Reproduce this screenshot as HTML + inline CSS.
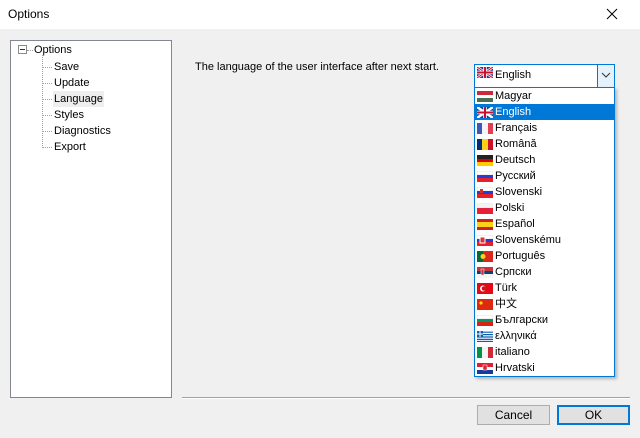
<!DOCTYPE html>
<html><head><meta charset="utf-8"><style>
*{margin:0;padding:0;box-sizing:border-box}
body{width:640px;height:438px;background:#f0f0f0;font-family:"Liberation Sans","Noto Sans CJK SC",sans-serif;font-size:11px;color:#000;position:relative;overflow:hidden}
.abs{position:absolute}
#title{left:0;top:0;width:640px;height:29px;background:#fff}
#tree{left:10px;top:40px;width:162px;height:358px;background:#fff;border:1px solid #828790}
.ti{position:absolute;left:43px;font-size:11px;line-height:14px}
.dl{position:absolute;border-top:1px dotted #a0a0a0;width:9px}
.btn{position:absolute;top:405px;width:73px;height:20px;background:#e1e1e1;border:1px solid #adadad;text-align:center;line-height:18px;font-size:12px}
#list{left:474px;top:87px;width:141px;height:290px;background:#fff;border:1px solid #0078d7;box-shadow:2px 2px 3px rgba(0,0,0,.25)}
.it{position:absolute;left:0;width:139px;height:16px;line-height:16px;padding-left:20px;font-size:11px}
.fl{position:absolute;left:2px;top:3px;width:16px;height:11px}
</style></head><body>
<div id="title" class="abs"><span class="abs" style="left:8px;top:7px;font-size:12px">Options</span>
<svg class="abs" style="left:606px;top:8px" width="12" height="12"><path d="M1 1L11 11M11 1L1 11" stroke="#000" stroke-width="1"/></svg></div>
<div id="tree" class="abs"></div>
<svg class="abs" style="left:18px;top:45px" width="12" height="12"><rect x="0.5" y="0.5" width="8" height="8" fill="#fff" stroke="#8a8a8a"/><path d="M2 4.5H7" stroke="#333"/></svg>
<div class="dl" style="left:27px;top:50px;width:6px"></div>
<div class="abs" style="left:42px;top:55px;height:93px;border-left:1px dotted #a0a0a0"></div>
<span class="abs" style="left:34px;top:44px;font-size:11px">Options</span>
<div class="dl" style="left:43px;top:67px"></div><span class="ti" style="left:54px;top:60px">Save</span>
<div class="dl" style="left:43px;top:83px"></div><span class="ti" style="left:54px;top:76px">Update</span>
<div class="dl" style="left:43px;top:99px"></div><span class="ti" style="left:53px;top:91px;background:#eeeeee;padding:0 1px;height:16px;line-height:16px">Language</span>
<div class="dl" style="left:43px;top:115px"></div><span class="ti" style="left:54px;top:108px">Styles</span>
<div class="dl" style="left:43px;top:131px"></div><span class="ti" style="left:54px;top:124px">Diagnostics</span>
<div class="dl" style="left:43px;top:147px"></div><span class="ti" style="left:54px;top:140px">Export</span>
<span class="abs" style="left:195px;top:61px;font-size:11px">The language of the user interface after next start.</span>
<div class="abs" style="left:474px;top:64px;width:141px;height:24px;background:#fff;border:1px solid #0078d7"></div>
<div class="abs" style="left:597px;top:65px;width:17px;height:22px;background:#e5f1fb;border-left:1px solid #0078d7"></div>
<svg class="abs" style="left:601px;top:72px" width="10" height="6"><path d="M1 1L5 5L9 1" stroke="#333" fill="none"/></svg>
<svg class="abs" style="left:477px;top:67px" width="16" height="11"><rect width="16" height="11" fill="#233b8f"/><path d="M0 0L16 11M16 0L0 11" stroke="#fff" stroke-width="2.5"/><path d="M0 0L16 11M16 0L0 11" stroke="#c8102e" stroke-width="1"/><path d="M8 0V11M0 5.5H16" stroke="#fff" stroke-width="3.5"/><path d="M8 0V11M0 5.5H16" stroke="#c8102e" stroke-width="2"/></svg>
<span class="abs" style="left:495px;top:69px;font-size:11px">English</span>
<div id="list" class="abs">
<div class="it" style="top:0"><svg class="fl"><rect width="16" height="4" fill="#ce2939"/><rect y="4" width="16" height="3" fill="#fff"/><rect y="7" width="16" height="4" fill="#477050"/></svg>Magyar</div>
<div class="it" style="top:16px;background:#0078d7;color:#fff"><svg class="fl"><rect width="16" height="11" fill="#233b8f"/><path d="M0 0L16 11M16 0L0 11" stroke="#fff" stroke-width="2.5"/><path d="M8 0V11M0 5.5H16" stroke="#fff" stroke-width="3.5"/><path d="M8 0V11M0 5.5H16" stroke="#c8102e" stroke-width="2"/></svg>English</div>
<div class="it" style="top:32px"><svg class="fl"><rect width="6" height="11" fill="#3a5ab8"/><rect x="5" width="6" height="11" fill="#f4f4f4"/><rect x="11" width="5" height="11" fill="#e04050"/></svg>Français</div>
<div class="it" style="top:48px"><svg class="fl"><rect width="6" height="11" fill="#002b7f"/><rect x="5" width="6" height="11" fill="#fcd116"/><rect x="11" width="5" height="11" fill="#ce1126"/></svg>Română</div>
<div class="it" style="top:64px"><svg class="fl"><rect width="16" height="4" fill="#222"/><rect y="4" width="16" height="3" fill="#dd0000"/><rect y="7" width="16" height="4" fill="#ffce00"/></svg>Deutsch</div>
<div class="it" style="top:80px"><svg class="fl"><rect width="16" height="4" fill="#fff" stroke="#ccc" stroke-width=".5"/><rect y="4" width="16" height="3" fill="#1f3fd8"/><rect y="7" width="16" height="4" fill="#e4202a"/></svg>Русский</div>
<div class="it" style="top:96px"><svg class="fl"><rect width="16" height="4" fill="#fff" stroke="#ccc" stroke-width=".5"/><rect y="4" width="16" height="3" fill="#1f3fd8"/><rect y="7" width="16" height="4" fill="#e4202a"/><rect x="3" y="2" width="3" height="4" fill="#c33"/></svg>Slovenski</div>
<div class="it" style="top:112px"><svg class="fl"><rect width="16" height="5" fill="#f4f4f4" stroke="#ddd" stroke-width=".5"/><rect y="5" width="16" height="6" fill="#e4203a"/></svg>Polski</div>
<div class="it" style="top:128px"><svg class="fl"><rect width="16" height="3" fill="#d02020"/><rect y="3" width="16" height="5" fill="#fcd116"/><rect y="8" width="16" height="3" fill="#d02020"/></svg>Español</div>
<div class="it" style="top:144px"><svg class="fl"><rect width="16" height="4" fill="#fff" stroke="#ccc" stroke-width=".5"/><rect y="4" width="16" height="3" fill="#1f3fd8"/><rect y="7" width="16" height="4" fill="#e4202a"/><rect x="3" y="2" width="5" height="6" fill="#d33" stroke="#fff"/></svg>Slovenskému</div>
<div class="it" style="top:160px"><svg class="fl"><rect width="6" height="11" fill="#046a38"/><rect x="6" width="10" height="11" fill="#da291c"/><circle cx="6" cy="5.5" r="2.5" fill="#fcd116"/></svg>Português</div>
<div class="it" style="top:176px"><svg class="fl"><rect width="16" height="4" fill="#c6363c"/><rect y="4" width="16" height="3" fill="#0c4076"/><rect y="7" width="16" height="4" fill="#f4f4f4"/><rect x="4" y="2" width="3" height="6" fill="#c6363c" stroke="#fff" stroke-width=".5"/></svg>Српски</div>
<div class="it" style="top:192px"><svg class="fl"><rect width="16" height="11" fill="#e30a17"/><circle cx="6" cy="5.5" r="3" fill="#fff"/><circle cx="7" cy="5.5" r="2.3" fill="#e30a17"/></svg>Türk</div>
<div class="it" style="top:208px"><svg class="fl"><rect width="16" height="11" fill="#de2910"/><circle cx="4" cy="4" r="1.6" fill="#ffde00"/></svg>中文</div>
<div class="it" style="top:224px"><svg class="fl"><rect width="16" height="4" fill="#fff" stroke="#ccc" stroke-width=".5"/><rect y="4" width="16" height="3" fill="#00966e"/><rect y="7" width="16" height="4" fill="#d62612"/></svg>Български</div>
<div class="it" style="top:240px"><svg class="fl"><rect width="16" height="11" fill="#fff"/><path d="M0 1.2H16M0 3.6H16M0 6H16M0 8.4H16M0 10.5H16" stroke="#0d5eaf" stroke-width="1.2"/><rect width="6" height="6" fill="#0d5eaf"/><path d="M3 0V6M0 3H6" stroke="#fff"/></svg>ελληνικά</div>
<div class="it" style="top:256px"><svg class="fl"><rect width="6" height="11" fill="#009246"/><rect x="5" width="6" height="11" fill="#f4f4f4"/><rect x="11" width="5" height="11" fill="#ce2b37"/></svg>italiano</div>
<div class="it" style="top:272px"><svg class="fl"><rect width="16" height="4" fill="#e02030"/><rect y="4" width="16" height="3" fill="#fff"/><rect y="7" width="16" height="4" fill="#1a3a9a"/><rect x="6" y="2" width="4" height="5" fill="#e02030" stroke="#fff" stroke-width=".5"/></svg>Hrvatski</div>
</div>
<div class="abs" style="left:182px;top:397px;width:448px;height:1px;background:#a0a0a0"></div>
<div class="abs" style="left:182px;top:398px;width:448px;height:1px;background:#fff"></div>
<div class="btn" style="left:477px">Cancel</div>
<div class="btn" style="left:557px;border:2px solid #0078d7;line-height:16px">OK</div>
</body></html>
